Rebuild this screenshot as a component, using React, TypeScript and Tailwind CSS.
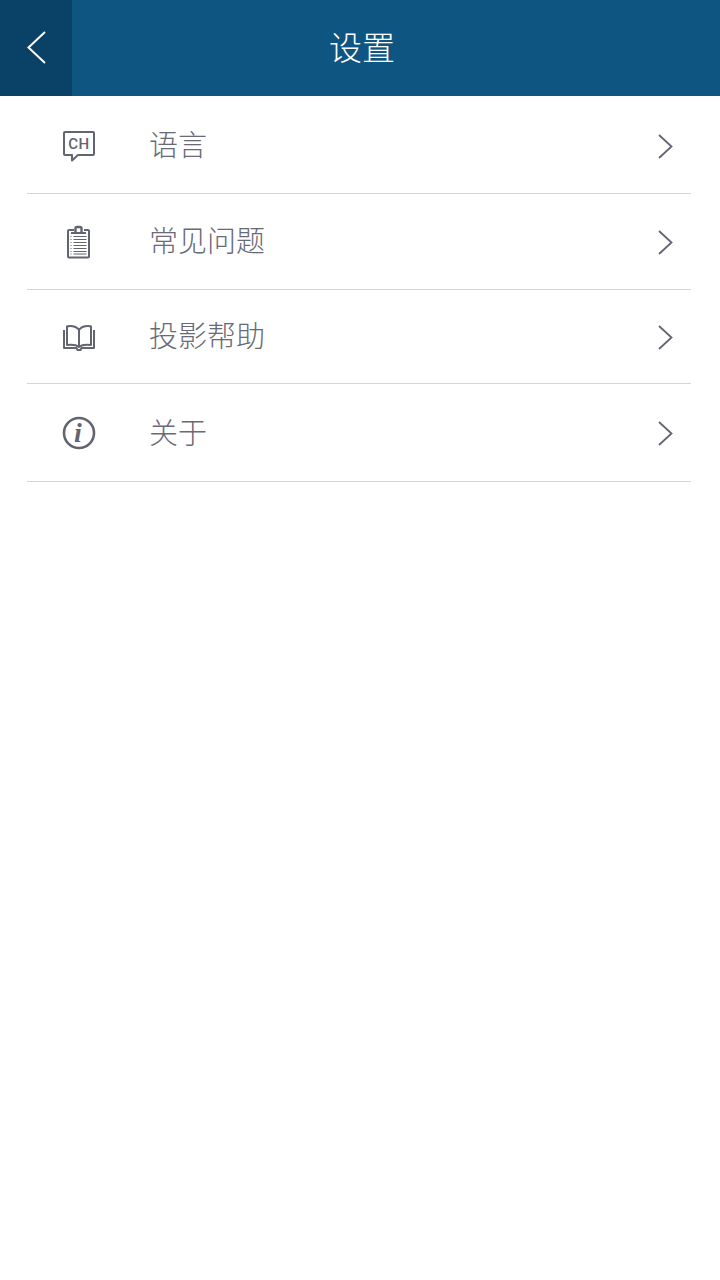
import React from "react";

function ChatIcon() {
  return (
    <svg width="34" height="32" viewBox="0 0 34 32" fill="none" stroke="#62646f" strokeWidth="2">
      <path d="M3 2h28a1 1 0 0 1 1 1v21a1 1 0 0 1-1 1H16l-6 5.500V25H3a1 1 0 0 1-1-1V3a1 1 0 0 1 1-1z" strokeLinejoin="round" />
      <text x="17" y="18.500" textAnchor="middle" fontFamily="'Roboto', sans-serif" fontSize="15" fontWeight="500" letterSpacing="0.5" fill="#62646f" stroke="none">CH</text>
    </svg>
  );
}

function ClipboardIcon() {
  return (
    <svg width="26" height="34" viewBox="0 0 26 34" fill="none" stroke="#62646f" strokeWidth="2">
      <path d="M8 5H3a1 1 0 0 0-1 1v25.500a1 1 0 0 0 1 1h19a1 1 0 0 0 1-1V6a1 1 0 0 0-1-1H18" />
      <path d="M5 8h15" strokeWidth="2" />
      <path d="M9.500 7V3.500a1.500 1.500 0 0 1 1.500-1.500h3a1.500 1.500 0 0 1 1.500 1.500V7" strokeWidth="2.400" />
      <path d="M7.500 11.500h13M7.500 14.500h13M7.500 17.500h13M7.500 20.500h13M7.500 23.500h13M7.500 26.500h13M7.500 29h13" strokeWidth="1" />
      <path d="M4.500 11.500h1M4.500 14.500h1M4.500 17.500h1M4.500 20.500h1M4.500 23.500h1M4.500 26.500h1M4.500 29h1" strokeWidth="1" />
    </svg>
  );
}

function BookIcon() {
  return (
    <svg width="34" height="28" viewBox="0 0 34 28" fill="none" stroke="#62646f" strokeWidth="2" strokeLinejoin="round">
      <path d="M17 6c-2-3-5-4-9-4-1 0-2 0-3 .5V21c4-.5 9-.5 12 2 3-2.500 8-2.500 12-2V2.500C28 2 27 2 26 2c-4 0-7 1-9 4z" />
      <path d="M17 6v17" />
      <path d="M2 6v18h12.500l1 2h3l1-2H32V6" />
    </svg>
  );
}

function InfoIcon() {
  return (
    <svg width="34" height="34" viewBox="0 0 34 34" fill="none">
      <circle cx="17" cy="17" r="15" stroke="#62646f" strokeWidth="2.600" />
      <text x="16" y="25.500" textAnchor="middle" fontFamily="'Liberation Serif', serif" fontSize="28" fontWeight="700" fontStyle="italic" fill="#62646f">i</text>
    </svg>
  );
}

function BackChevron() {
  return (
    <svg width="19" height="33" viewBox="0 0 19 33" fill="none" stroke="#ffffff" strokeWidth="2">
      <path d="M18 1L1.500 16.500L18 32" />
    </svg>
  );
}

function RightChevron() {
  return (
    <svg width="15" height="25" viewBox="0 0 15 25" fill="none" stroke="#62646f" strokeWidth="1.800">
      <path d="M1 1l12.500 11.500L1 24" />
    </svg>
  );
}

const rows = [
  { label: "语言", icon: <ChatIcon />, cls: "h-[98px]", iconCls: "pt-[2px]", textCls: "-translate-y-[1px]", chevronCls: "mt-[3px]" },
  { label: "常见问题", icon: <ClipboardIcon />, cls: "h-[96px]", iconCls: "", textCls: "-translate-y-[2px]", chevronCls: "mt-[1px]" },
  { label: "投影帮助", icon: <BookIcon />, cls: "h-[94px]", iconCls: "pt-[2px]", textCls: "-translate-y-[2px]", chevronCls: "mt-[1px]" },
  { label: "关于", icon: <InfoIcon />, cls: "h-[98px]", iconCls: "", textCls: "-translate-y-[1px]", chevronCls: "mt-[1px]" },
];

export default function App() {
  return (
    <div className="min-h-[1280px] bg-white font-['Noto_Sans_CJK_SC','Noto_Sans',sans-serif]">
      <header className="h-24 bg-[#0f5582] flex items-center">
        <button className="w-[72px] h-24 bg-[#0a4267] flex items-center pl-[27px] pb-[2px]">
          <BackChevron />
        </button>
        <h1 className="flex-1 text-center text-[33px] text-white font-light pr-[68px] pb-1 leading-none">设置</h1>
      </header>
      <div className="pl-[27px] pr-[29px]">
        {rows.map((r) => (
          <div key={r.label} className={`flex items-center border-b border-[#d4d4d6] ${r.cls}`}>
            <div className={`w-[104px] flex justify-center shrink-0 ${r.iconCls}`}>{r.icon}</div>
            <span className={`ml-[19px] flex-1 text-[29px] leading-none text-[#696a75] font-light -translate-x-px ${r.textCls}`}>{r.label}</span>
            <div className={`mr-[18px] flex ${r.chevronCls}`}><RightChevron /></div>
          </div>
        ))}
      </div>
    </div>
  );
}
